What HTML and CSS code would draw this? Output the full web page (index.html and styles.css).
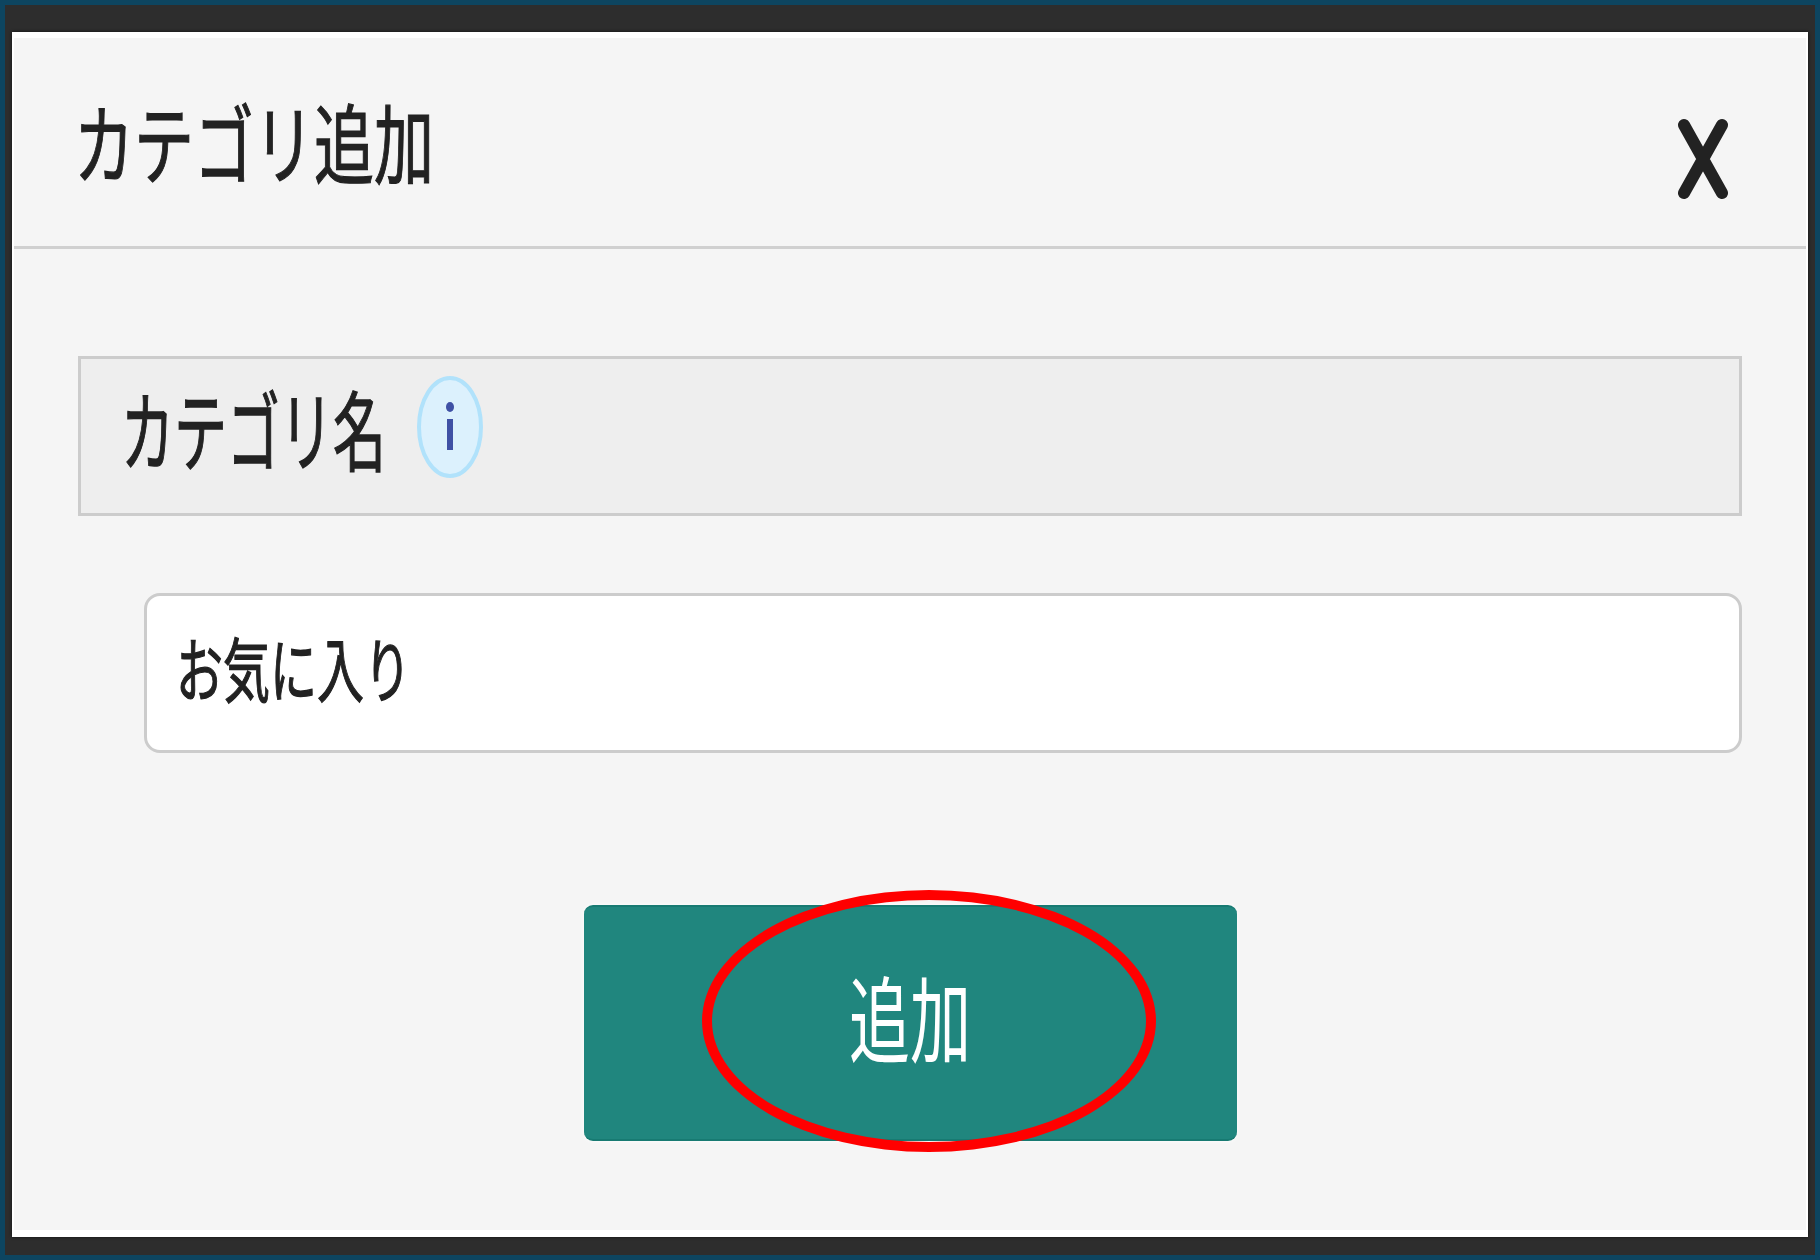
FILE: index.html
```html
<!DOCTYPE html>
<html lang="ja">
<head>
    <meta charset="UTF-8">
    <title>カテゴリ追加</title>
    <link rel="stylesheet" href="styles.css">
</head>
<body>
    <div class="frame">
        <div class="dialog">
            <div class="dialog-header">
                <h1 class="dialog-title"><span class="tall">カテゴリ追加</span></h1>
                <svg class="close-icon" width="54" height="84" viewBox="0 0 54 84">
                    <path d="M8 8 L46 76 M46 8 L8 76" fill="none" stroke="#222" stroke-width="12" stroke-linecap="round"/>
                </svg>
            </div>
            <div class="dialog-body">
                <div class="field-label">
                    <span class="tall">カテゴリ名</span>
                    <svg class="info-icon" width="66" height="102" viewBox="0 0 66 102">
                        <ellipse cx="33" cy="51" rx="31" ry="49" fill="#dcf1fd" stroke="#b1e2fb" stroke-width="4"/>
                        <ellipse cx="33" cy="31" rx="4" ry="5" fill="#3f51a5"/>
                        <rect x="30" y="43" width="6" height="31" fill="#3f51a5"/>
                    </svg>
                </div>
                <div class="field-input"><span class="tall">お気に入り</span></div>
                <div class="actions">
                    <button class="add-button"><span class="tall">追加</span><span class="red-mark"></span></button>
                </div>
            </div>
        </div>
    </div>
</body>
</html>
```

FILE: styles.css
```css
html, body {
    margin: 0;
    height: 100%;
}

body {
    font-family: "Noto Sans CJK JP", "Liberation Sans", sans-serif;
    color: #222;
}

.frame {
    box-sizing: border-box;
    width: 1820px;
    height: 1260px;
    border: 5px solid #0d4560;
    background-color: #2d2d2d;
    padding: 27px 7px 18px 7px;
}

.dialog {
    box-sizing: border-box;
    height: 100%;
    background-color: #f5f5f5;
    border-style: solid;
    border-color: #fff;
    border-width: 6px 2px 7px 2px;
    box-shadow: 0 0 3px #111;
    filter: blur(0.7px);
}

/* el texto del original esta estirado en vertical */
.tall {
    display: inline-block;
    transform: scaleY(1.5);
    white-space: nowrap;
    -webkit-text-stroke: 0.8px currentColor;
}

.dialog-header {
    display: flex;
    justify-content: space-between;
    align-items: center;
    height: 211px;
    padding: 0 76px 5px 60px;
    box-sizing: border-box;
    border-bottom: 3px solid #d0d0d0;
}

.dialog-title {
    margin: 0;
    font-size: 60px;
    font-weight: 400;
}

.dialog-title .tall {
    transform: scaleY(1.45);
}

.close-icon {
    margin-top: 39px;
}

.dialog-body {
    padding: 107px 64px 0 64px;
}

.field-label {
    box-sizing: border-box;
    display: flex;
    align-items: center;
    gap: 31px;
    height: 160px;
    padding: 0 0 18px 40px;
    background-color: #eee;
    border: 3px solid #ccc;
    font-size: 53px;
}

.field-label .tall {
    transform: scaleY(1.65);
}

.field-input {
    box-sizing: border-box;
    display: flex;
    align-items: center;
    height: 160px;
    margin: 77px 0 0 66px;
    padding: 0 0 14px 29px;
    background-color: #fff;
    border: 3px solid #ccc;
    border-radius: 16px;
    font-size: 47px;
}

.actions {
    display: flex;
    justify-content: center;
    margin-top: 152px;
}

.add-button {
    position: relative;
    width: 653px;
    height: 236px;
    padding: 0 0 18px 0;
    border: none;
    border-top: 2px solid #177a72;
    border-bottom: 2px solid #177a72;
    border-radius: 9px;
    background-color: #20867e;
    box-shadow: 0 0 4px #fff;
    color: #fff;
    font-family: inherit;
    font-size: 61px;
}

.add-button .tall {
    transform: scaleY(1.55);
    -webkit-text-stroke: 0;
}

.red-mark {
    position: absolute;
    left: 118px;
    top: -17px;
    box-sizing: border-box;
    width: 454px;
    height: 262px;
    border: 10px solid #f00;
    border-radius: 50%;
}
```
